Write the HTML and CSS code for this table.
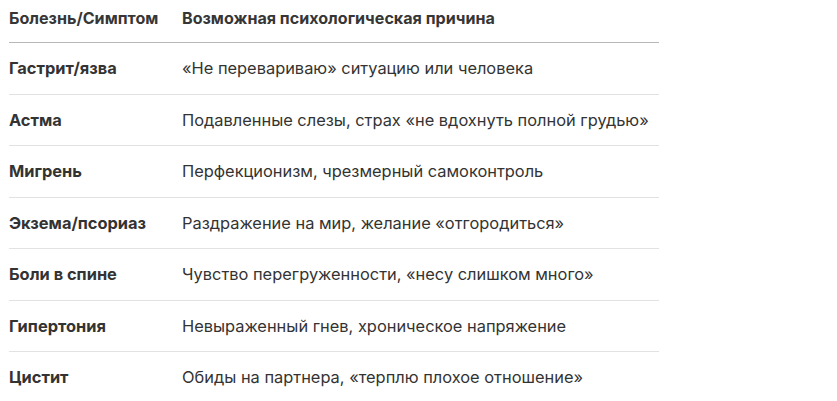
FILE: index.html
```html
<!DOCTYPE html>
<html lang="ru">
<head>
<meta charset="utf-8">
<link rel="stylesheet" href="styles.css">
</head>
<body>
<div class="wrap">
<table class="tbl">
<thead>
<tr><th class="c1">Болезнь/Симптом</th><th class="c2">Возможная психологическая причина</th></tr>
</thead>
<tbody>
<tr><td class="c1">Гастрит/язва</td><td class="c2">«Не перевариваю» ситуацию или человека</td></tr>
<tr><td class="c1">Астма</td><td class="c2">Подавленные слезы, страх «не вдохнуть полной грудью»</td></tr>
<tr><td class="c1">Мигрень</td><td class="c2">Перфекционизм, чрезмерный самоконтроль</td></tr>
<tr><td class="c1">Экзема/псориаз</td><td class="c2">Раздражение на мир, желание «отгородиться»</td></tr>
<tr><td class="c1">Боли в спине</td><td class="c2">Чувство перегруженности, «несу слишком много»</td></tr>
<tr><td class="c1">Гипертония</td><td class="c2">Невыраженный гнев, хроническое напряжение</td></tr>
<tr><td class="c1">Цистит</td><td class="c2">Обиды на партнера, «терплю плохое отношение»</td></tr>
</tbody>
</table>
</div>
</body>
</html>
```
FILE: styles.css
```css
html, body {
  margin: 0;
  padding: 0;
  background: #ffffff;
}
body {
  font-family: Inter, "Noto Sans", sans-serif;
  color: #333333;
}
.wrap {
  padding: 0 9px;
}
.tbl {
  width: 650px;
  border-collapse: collapse;
  table-layout: fixed;
}
.tbl th {
  text-align: left;
  font-size: 16.1px;
  font-weight: 700;
  line-height: 22px;
  padding: 7px 0 13px 0;
  border-bottom: 1px solid #b8b8b8;
  color: #363636;
  white-space: nowrap;
}
.tbl th.c1 {
  width: 158px;
}
.tbl th.c2 {
  padding-left: 15px;
}
.tbl td {
  font-size: 16.4px;
  line-height: 22.5px;
  padding: 14px 0 14px 0;
  border-bottom: 1px solid #e2e2e2;
}
.tbl tbody tr:last-child td {
  border-bottom: none;
}
.tbl td.c1 {
  font-weight: 700;
}
.tbl td.c2 {
  padding-left: 15px;
}
```
